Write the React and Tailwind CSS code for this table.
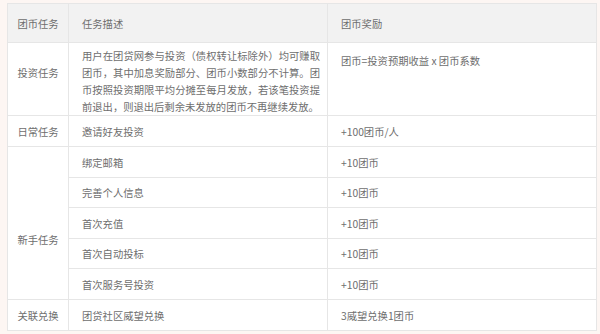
export default function App() {
  const font = { fontFamily: '"Noto Sans CJK SC", "Noto Sans", sans-serif' };
  const cell = "border border-[#e6e6e6] px-0 text-[10.3px] leading-[17px] text-[#6e6e6e]";
  const newbie = [
    ["绑定邮箱", "+10团币", "h-[31px]"],
    ["完善个人信息", "+10团币", "h-[30px]"],
    ["首次充值", "+10团币", "h-[31px]"],
    ["首次自动投标", "+10团币", "h-[30px]"],
    ["首次服务号投资", "+10团币", "h-[31px]"],
  ];
  return (
    <div className="w-[600px] h-[334px] bg-[#fdf6f3] pt-[3px] pl-[7px] overflow-hidden" style={font}>
      <table className="border-collapse table-fixed w-[589px] bg-white">
        <colgroup>
          <col className="w-[61px]" />
          <col className="w-[259px]" />
          <col className="w-[269px]" />
        </colgroup>
        <tbody>
          <tr className="bg-[#f2f2f2]">
            <td className={`${cell} h-[39px] text-center align-middle`}>团币任务</td>
            <td className={`${cell} h-[39px] pl-[13px] align-middle`}>任务描述</td>
            <td className={`${cell} h-[39px] pl-[13px] align-middle`}>团币奖励</td>
          </tr>
          <tr>
            <td className={`${cell} h-[73px] text-center align-top pt-[21px]`}>投资任务</td>
            <td className={`${cell} h-[73px] align-top pt-[4px] pl-[13px]`}>
              <div className="w-[238px] text-justify">
                用户在团贷网参与投资（债权转让标除外）均可赚取团币，其中加息奖励部分、团币小数部分不计算。团币按照投资期限平均分摊至每月发放，若该笔投资提前退出，则退出后剩余未发放的团币不再继续发放。
              </div>
            </td>
            <td className={`${cell} h-[73px] align-top pt-[9px] pl-[13px]`}>团币=投资预期收益 x 团币系数</td>
          </tr>
          <tr>
            <td className={`${cell} h-[31px] text-center align-middle`}>日常任务</td>
            <td className={`${cell} h-[31px] pl-[13px] align-middle`}>邀请好友投资</td>
            <td className={`${cell} h-[31px] pl-[13px] align-middle`}>+100团币/人</td>
          </tr>
          {newbie.map(([d, r, h], i) => (
            <tr key={d}>
              {i === 0 && (
                <td rowSpan={5} className={`${cell} text-center align-top pt-[84px]`}>新手任务</td>
              )}
              <td className={`${cell} ${h} pl-[13px] align-middle`}>{d}</td>
              <td className={`${cell} ${h} pl-[13px] align-middle`}>{r}</td>
            </tr>
          ))}
          <tr>
            <td className={`${cell} h-[31px] text-center align-middle`}>关联兑换</td>
            <td className={`${cell} h-[31px] pl-[13px] align-middle`}>团贷社区威望兑换</td>
            <td className={`${cell} h-[31px] pl-[13px] align-middle`}>3威望兑换1团币</td>
          </tr>
        </tbody>
      </table>
    </div>
  );
}
